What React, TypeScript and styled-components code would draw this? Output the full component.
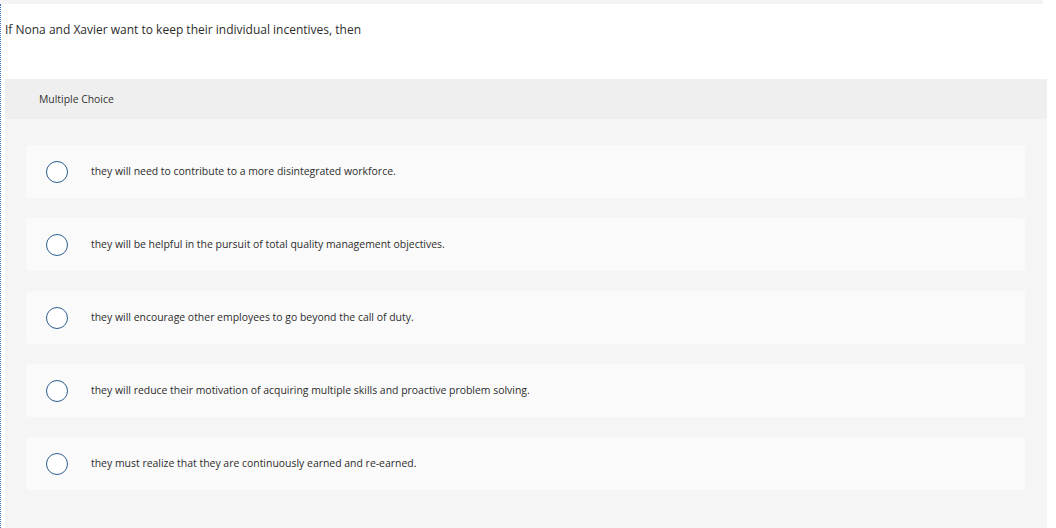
import styled, { createGlobalStyle } from "styled-components";

const GlobalStyle = createGlobalStyle`
  html, body {
    margin: 0;
    padding: 0;
    background: #ffffff;
  }
  body {
    font-family: "Open Sans", "Liberation Sans", sans-serif;
    color: #333333;
  }
`;

const options = [
  "they will need to contribute to a more disintegrated workforce.",
  "they will be helpful in the pursuit of total quality management objectives.",
  "they will encourage other employees to go beyond the call of duty.",
  "they will reduce their motivation of acquiring multiple skills and proactive problem solving.",
  "they must realize that they are continuously earned and re-earned.",
];

const App = () => {
  return (
    <>
      <GlobalStyle />
      <TopStrip />
      <Page>
        <Question>If Nona and Xavier want to keep their individual incentives, then</Question>
        <Panel>
          <PanelHeader>Multiple Choice</PanelHeader>
          <OptionList>
            {options.map((text) => (
              <Option key={text}>
                <Radio />
                <OptionText>{text}</OptionText>
              </Option>
            ))}
          </OptionList>
        </Panel>
      </Page>
    </>
  );
};

export default App;

const TopStrip = styled.div`
  width: 1043px;
  height: 4px;
  background: #f4f4f4;
`;

const Page = styled.div`
  width: 1042px;
  border-left: 1px dotted #3a6fc4;
  padding-left: 4px;
  height: 524px;
  display: flex;
  flex-direction: column;
`;

const Question = styled.div`
  font-size: 12px;
  line-height: 16px;
  padding-top: 18px;
  height: 57px;
  color: #2d2d2d;
`;

const Panel = styled.div`
  flex: 1;
  background: #f5f5f5;
  display: flex;
  flex-direction: column;
`;

const PanelHeader = styled.div`
  height: 40px;
  background: #efefef;
  display: flex;
  align-items: center;
  padding-left: 34px;
  font-size: 10.4px;
  color: #333333;
`;

const OptionList = styled.div`
  display: flex;
  flex-direction: column;
  gap: 20px;
  padding: 26px 22px 0 21px;
`;

const Option = styled.div`
  height: 53px;
  background: #fafafa;
  border-radius: 3px;
  display: flex;
  align-items: center;
  padding-left: 20px;
`;

const Radio = styled.span`
  width: 20px;
  height: 20px;
  border: 1.5px solid #2c5d8f;
  border-radius: 50%;
  background: #ffffff;
  flex-shrink: 0;
`;

const OptionText = styled.span`
  margin-left: 23px;
  margin-top: -1px;
  font-size: 10.45px;
  color: #2d2d2d;
`;
